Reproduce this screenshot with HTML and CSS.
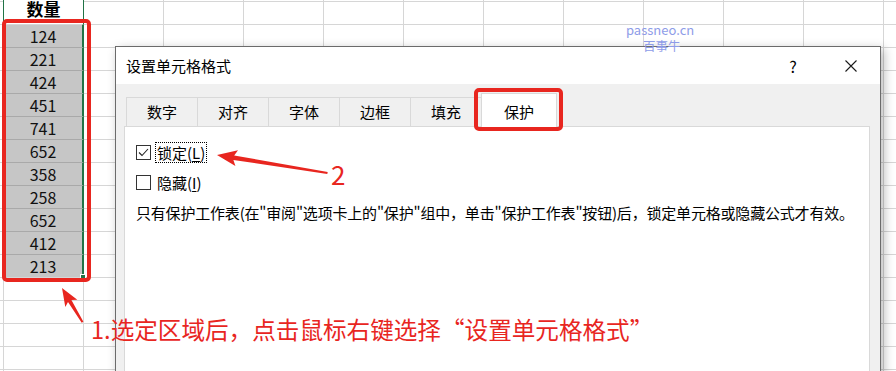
FILE: index.html
```html
<!DOCTYPE html>
<html lang="zh-CN">
<head>
<meta charset="utf-8">
<title>设置单元格格式</title>
<link rel="stylesheet" href="styles.css">
</head>
<body>
<div class="sheet">
  <div class="col">
    <div class="hdr">数量</div>
    <div class="cell">124</div>
    <div class="cell">221</div>
    <div class="cell">424</div>
    <div class="cell">451</div>
    <div class="cell">741</div>
    <div class="cell">652</div>
    <div class="cell">358</div>
    <div class="cell">258</div>
    <div class="cell">652</div>
    <div class="cell">412</div>
    <div class="cell">213</div>
    <div class="handle"></div>
  </div>

  <div class="wm">
    <div class="wm-en">passneo.cn</div>
    <div class="wm-cn">百事牛</div>
  </div>

  <div class="dialog">
    <div class="titlebar">
      <span class="title">设置单元格格式</span>
      <span class="help">?</span>
      <span class="close"><svg width="12" height="12" viewBox="0 0 12 12"><path d="M0.5 0.5 L11.5 11.5 M11.5 0.5 L0.5 11.5" stroke="#1a1a1a" stroke-width="1.1" fill="none"/></svg></span>
    </div>
    <div class="body">
      <div class="tabs">
        <div class="tab">数字</div>
        <div class="tab">对齐</div>
        <div class="tab">字体</div>
        <div class="tab">边框</div>
        <div class="tab">填充</div>
        <div class="tab active">保护</div>
      </div>
      <div class="panel">
        <div class="opt">
          <span class="box"><svg width="13" height="13" viewBox="0 0 13 13"><path d="M2 6.5 L5 9.5 L11 3" stroke="#222" stroke-width="1.1" fill="none"/></svg></span>
          <span class="lbl focus">锁定(<u>L</u>)</span>
        </div>
        <div class="opt">
          <span class="box"></span>
          <span class="lbl">隐藏(<u>I</u>)</span>
        </div>
        <p class="note">只有保护工作表(在"审阅"选项卡上的"保护"组中，单击"保护工作表"按钮)后，锁定单元格或隐藏公式才有效。</p>
      </div>
    </div>
  </div>

  <div class="mark mark-col"></div>
  <div class="mark mark-tab"></div>

  <svg class="arrows" width="896" height="371" viewBox="0 0 896 371">
    <polygon points="217,155 238,150.3 234.2,155.5 327.7,172 327.3,174 233.4,159.9 235.4,166.1" fill="#e8261f"/>
    <polygon points="62,288 77.3,299.8 71.4,299.9 83.4,321.8 81.7,322.8 68,301.9 65.3,307" fill="#e8261f"/>
  </svg>

  <div class="num2">2</div>
  <div class="caption">1.选定区域后，点击鼠标右键选择“设置单元格格式”</div>
</div>
</body>
</html>
```
FILE: styles.css
```css
* { box-sizing: border-box; }
html, body { margin: 0; padding: 0; }
body {
  font-family: "Noto Sans CJK SC", "Noto Sans", sans-serif;
  background: #fff;
}
.sheet {
  position: relative;
  width: 896px;
  height: 371px;
  overflow: hidden;
  background-color: #fff;
  background-image:
    linear-gradient(to right, #d6d6d6 1px, transparent 1px),
    linear-gradient(to bottom, #d6d6d6 1px, transparent 1px);
  background-size: 80px 100%, 100% 23px;
  background-position: 3px 0, 0 1px;
}

/* column A */
.col {
  position: relative;
  margin-left: 3px;
  width: 81px;
  display: flex;
  flex-direction: column;
}
.hdr {
  height: 24px;
  border-left: 1px solid #217346;
  border-right: 1px solid #217346;
  background: #fff;
  font-size: 17px;
  font-weight: bold;
  line-height: 17px;
  text-align: center;
  color: #000;
}
.cell {
  height: 23px;
  border-top: 1px solid #a9a9a9;
  border-left: 1px solid #c6c6c6;
  border-right: 2px solid #217346;
  background: #c6c6c6;
  font-size: 16px;
  line-height: 22px;
  text-align: center;
  color: #111;
}
.hdr + .cell { border-top-color: #d6d6d6; }
.handle {
  position: absolute;
  right: -2px;
  bottom: -3px;
  width: 6px;
  height: 6px;
  background: #217346;
  border: 1px solid #fff;
}

/* watermark */
.wm {
  position: absolute;
  left: 626px;
  top: 22px;
  z-index: 3;
  color: #8e9ce8;
  line-height: 15px;
}
.wm-en { font-size: 13px; }
.wm-cn { font-size: 12.5px; margin-left: 17px; margin-top: 1px; }

/* dialog */
.dialog {
  position: absolute;
  left: 115px;
  top: 46px;
  width: 766px;
  height: 345px;
  border: 1px solid #6b6b6b;
  background: #f0f0f0;
  box-shadow: 3px 3px 10px rgba(0, 0, 0, 0.28);
  display: flex;
  flex-direction: column;
  color: #000;
  font-size: 15px;
}
.titlebar {
  height: 37px;
  background: #fff;
  display: flex;
  align-items: center;
  padding: 0 23px 0 10px;
}
.title { flex: 1; line-height: 20px; }
.help { width: 14px; text-align: center; font-size: 16px; line-height: 20px; }
.close { width: 12px; height: 12px; margin-left: 45px; display: flex; }

.body {
  flex: 1;
  display: flex;
  flex-direction: column;
  padding: 9px 10px 0 8px;
}
.tabs {
  display: flex;
  align-items: flex-end;
  margin-left: 2px;
  position: relative;
  z-index: 1;
}
.tab {
  width: 71px;
  height: 29px;
  border-top: 1px solid #d9d9d9;
  border-left: 1px solid #d9d9d9;
  text-align: center;
  line-height: 28px;
}
.tab.active {
  width: 76px;
  height: 34px;
  margin-bottom: -1px;
  background: #fff;
  border-right: 1px solid #d9d9d9;
  line-height: 35px;
}
.panel {
  flex: 1;
  background: #fff;
  border: 1px solid #d9d9d9;
  padding: 15px 10px 0 11px;
}
.opt {
  display: flex;
  align-items: center;
  height: 21px;
  margin-bottom: 9px;
}
.box {
  width: 15px;
  height: 15px;
  border: 1px solid #333;
  background: #fff;
  display: flex;
  align-items: center;
  justify-content: center;
  margin-right: 4px;
}
.lbl {
  border: 1px dotted transparent;
  padding: 0 1px;
  line-height: 19px;
}
.lbl.focus { border-color: #000; }
.lbl u { text-underline-offset: 2px; }
.note {
  margin: 1px 0 0;
  line-height: 21px;
  white-space: nowrap;
  letter-spacing: -0.19px;
}

/* annotations */
.mark {
  position: absolute;
  border: 4px solid #e8261f;
  border-radius: 5px;
  z-index: 4;
}
.mark-col { left: 2px; top: 19px; width: 89px; height: 263px; }
.mark-tab { left: 474px; top: 88px; width: 89px; height: 43px; }
.arrows { position: absolute; left: 0; top: 0; z-index: 5; }
.num2 {
  position: absolute;
  left: 331px;
  top: 159px;
  z-index: 5;
  font-size: 26px;
  line-height: 30px;
  color: #e8261f;
}
.caption {
  position: absolute;
  left: 91px;
  top: 314px;
  z-index: 5;
  font-size: 23.6px;
  line-height: 30px;
  color: #e8261f;
  white-space: nowrap;
}
```
